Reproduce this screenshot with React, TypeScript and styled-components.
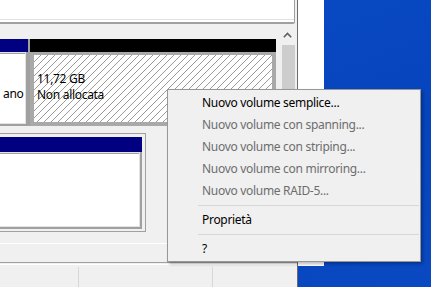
import React from 'react';
import styled, { createGlobalStyle } from 'styled-components';

const GlobalStyle = createGlobalStyle`
  html, body {
    margin: 0;
    padding: 0;
    background: #0746c0;
  }
  body {
    font-family: 'Noto Sans', 'Open Sans', sans-serif;
    font-size: 12px;
    letter-spacing: -0.3px;
  }
`;

const Screen = styled.div`
  position: relative;
  width: 431px;
  height: 287px;
  overflow: hidden;
  display: flex;
  align-items: flex-start;
  background: linear-gradient(160deg, #0a4cc6 0%, #0644bd 60%, #0a49c2 100%);
`;

const Window = styled.div`
  width: 297px;
  height: 287px;
  flex-shrink: 0;
  display: flex;
  flex-direction: column;
  background: #f0f0f0;
  border-right: 1px solid #6b6b6b;
  overflow: hidden;
`;

const BehindWindow = styled.div`
  width: 26px;
  height: 266px;
  flex-shrink: 0;
  background: #ffffff;
`;

const TopPane = styled.div`
  width: 294px;
  height: 22px;
  flex-shrink: 0;
  background: #ffffff;
  border-right: 1px solid #a0a0a0;
  border-bottom: 2px solid #a0a0a0;
  border-bottom-right-radius: 2px;
  box-shadow: inset 0 -2px 0 #ffffff, inset 0 -3px 0 #e3e3e3;
`;

const MainArea = styled.div`
  height: 219px;
  flex-shrink: 0;
  display: flex;
  border-bottom: 1px solid #ffffff;
`;

const GraphArea = styled.div`
  width: 279px;
  padding-top: 15px;
  display: flex;
  flex-direction: column;
  gap: 7px;
`;

const DiskRow = styled.div`
  height: 87px;
  display: flex;
  gap: 2px;
  background: #a0a0a0;
  width: 276px;
`;

const Partition = styled.div<{ $width: number }>`
  width: ${p => p.$width}px;
  flex-shrink: 0;
  display: flex;
  flex-direction: column;
  background: #f0f0f0;
`;

const PartitionHeader = styled.div<{ $color: string; $height: number }>`
  height: ${p => p.$height}px;
  flex-shrink: 0;
  background: ${p => p.$color};
`;

const PartitionBody = styled.div`
  flex: 1;
  display: flex;
  padding: 1px 1px 1px 0;
  background: #e3e3e3;
  border-right: 2px solid #a0a0a0;
  border-bottom: 2px solid #a0a0a0;
`;

const FramedBody = styled.div`
  flex: 1;
  position: relative;
  display: flex;
  border: 4px solid #a9a9a9;
  border-top-width: 3px;
  background: #ffffff;
`;

const CellText = styled.div<{ $pad: number }>`
  position: relative;
  padding: 16px 0 0 ${p => p.$pad}px;
  line-height: 16px;
  color: #000000;
  white-space: nowrap;
  overflow: hidden;
`;

const WhiteCell = styled.div`
  flex: 1;
  display: flex;
  background: #ffffff;
  border-top: 1px solid #a0a0a0;
`;

const HatchLayer = styled.svg`
  position: absolute;
  inset: 0;
  width: 100%;
  height: 100%;
`;

const SelectFrame = styled.div`
  width: 142px;
  height: 92px;
  padding: 3px 3px 2px 0;
  border-top: 1px solid #a0a0a0;
  border-right: 1px solid #a0a0a0;
  border-bottom: 1px solid #a0a0a0;
  display: flex;
`;

const Scrollbar = styled.div`
  width: 17px;
  margin: 2px 1px 0 0;
  display: flex;
  flex-direction: column;
  align-items: center;
`;

const ScrollArrow = styled.div`
  height: 17px;
  width: 100%;
  display: flex;
  align-items: center;
  justify-content: center;
`;

const ScrollThumb = styled.div`
  margin-top: 2px;
  width: 13px;
  margin-left: 1px;
  flex: 1;
  background: #cdcdcd;
`;

const LegendBar = styled.div`
  height: 18px;
  flex-shrink: 0;
`;

const StatusBar = styled.div`
  flex: 1;
  border-top: 1px solid #a0a0a0;
  padding-top: 1px;
  display: flex;
  flex-direction: column;
`;

const StatusInner = styled.div`
  flex: 1;
  border-top: 1px solid #ffffff;
  padding-top: 2px;
  display: flex;
`;

const StatusCell = styled.div<{ $width: number }>`
  width: ${p => p.$width}px;
  flex-shrink: 0;
  border-right: 1px solid #d7d7d7;
`;

const Menu = styled.div`
  position: absolute;
  left: 167px;
  top: 89px;
  width: 252px;
  padding: 2px 0 1px;
  background: #f0f0f0;
  border: 1px solid #979797;
  box-shadow: 2px 2px 3px rgba(0, 0, 0, 0.28);
  display: flex;
  flex-direction: column;
`;

const MenuItem = styled.div<{ $disabled?: boolean }>`
  height: 22px;
  line-height: 22px;
  padding-left: 34px;
  color: ${p => (p.$disabled ? '#6d6d6d' : '#000000')};
  white-space: nowrap;
`;

const MenuSeparator = styled.div`
  height: 7px;
  display: flex;
  align-items: center;
  padding: 0 1px 0 30px;

  &::after {
    content: '';
    flex: 1;
    height: 1px;
    background: #d7d7d7;
  }
`;

const Hatch: React.FC = () => (
  <HatchLayer shapeRendering="crispEdges">
    <defs>
      <pattern id="hatch" width="7" height="7" patternUnits="userSpaceOnUse">
        <path d="M0 7 L7 0" stroke="#9a9a9a" strokeWidth="1" />
      </pattern>
    </defs>
    <rect width="100%" height="100%" fill="url(#hatch)" />
  </HatchLayer>
);

const App: React.FC = () => {
  return (
    <>
      <GlobalStyle />
      <Screen>
        <Window>
          <TopPane />
          <MainArea>
            <GraphArea>
              <DiskRow>
                <Partition $width={28}>
                  <PartitionHeader $color="#000080" $height={13} />
                  <PartitionBody>
                    <WhiteCell>
                      <CellText $pad={3}>
                        &nbsp;
                        <br />
                        ano
                      </CellText>
                    </WhiteCell>
                  </PartitionBody>
                </Partition>
                <Partition $width={246}>
                  <PartitionHeader $color="#000000" $height={13} />
                  <FramedBody>
                    <Hatch />
                    <CellText $pad={3}>
                      11,72 GB
                      <br />
                      Non allocata
                    </CellText>
                  </FramedBody>
                </Partition>
              </DiskRow>
              <SelectFrame>
                <Partition $width={142}>
                  <PartitionHeader $color="#000080" $height={15} />
                  <PartitionBody>
                    <WhiteCell />
                  </PartitionBody>
                </Partition>
              </SelectFrame>
            </GraphArea>
            <Scrollbar>
              <ScrollArrow>
                <svg width="9" height="6" viewBox="0 0 9 6">
                  <path d="M0.8 5.2 L4.5 1.5 L8.2 5.2" stroke="#606060" strokeWidth="1.6" fill="none" />
                </svg>
              </ScrollArrow>
              <ScrollThumb />
            </Scrollbar>
          </MainArea>
          <LegendBar />
          <StatusBar>
            <StatusInner>
              <StatusCell $width={78} />
              <StatusCell $width={133} />
              <StatusCell $width={86} />
            </StatusInner>
          </StatusBar>
        </Window>
        <BehindWindow />
        <Menu>
          <MenuItem>Nuovo volume semplice...</MenuItem>
          <MenuItem $disabled>Nuovo volume con spanning...</MenuItem>
          <MenuItem $disabled>Nuovo volume con striping...</MenuItem>
          <MenuItem $disabled>Nuovo volume con mirroring...</MenuItem>
          <MenuItem $disabled>Nuovo volume RAID-5...</MenuItem>
          <MenuSeparator />
          <MenuItem>Proprietà</MenuItem>
          <MenuSeparator />
          <MenuItem>?</MenuItem>
        </Menu>
      </Screen>
    </>
  );
};

export default App;
